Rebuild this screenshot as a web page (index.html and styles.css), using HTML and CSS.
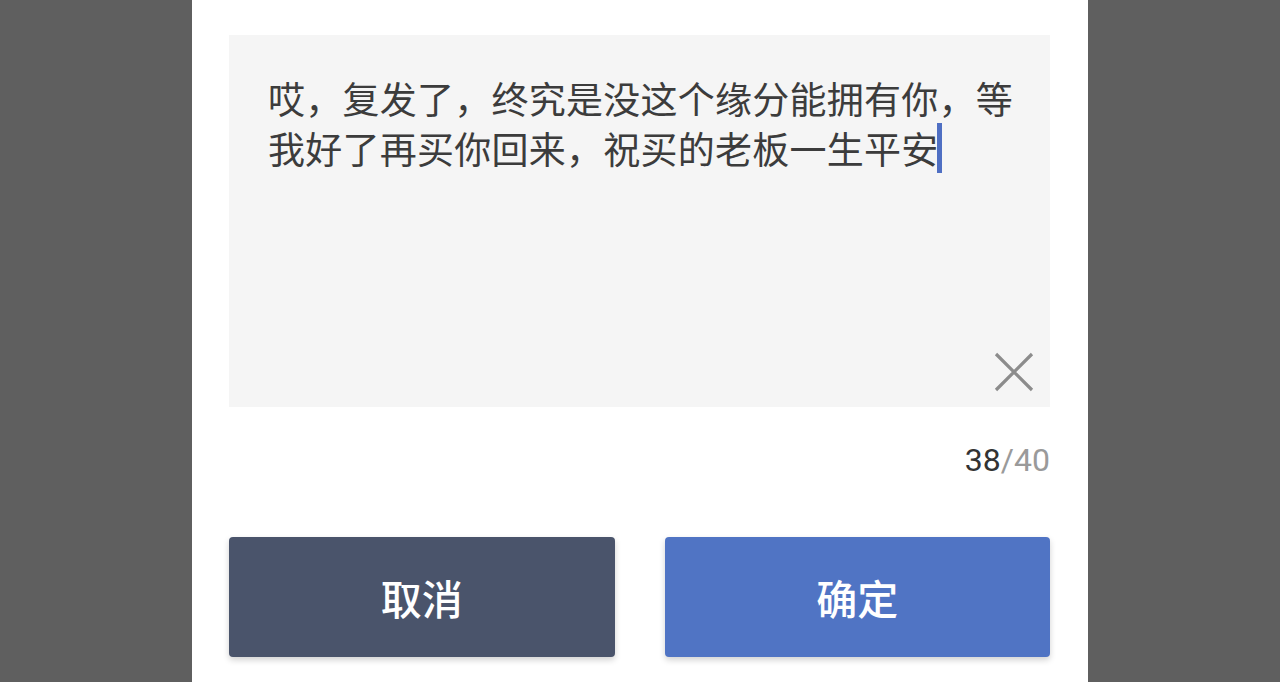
FILE: index.html
```html
<!DOCTYPE html>
<html lang="zh-CN">
<head>
    <meta charset="UTF-8">
    <meta name="viewport" content="width=device-width, initial-scale=1.0">
    <title>填写备注</title>
    <link rel="stylesheet" href="styles.css">
</head>
<body>
    <div class="dialog">
        <div class="input-box">
            <p class="input-text">哎，复发了，终究是没这个缘分能拥有你，等我好了再买你回来，祝买的老板一生平安<span class="caret"></span></p>
            <button class="clear" type="button" aria-label="清除">
                <svg width="40" height="40" viewBox="0 0 40 40">
                    <path d="M2 2 L38 38 M38 2 L2 38" stroke="#8c8c8c" stroke-width="3.2" fill="none"/>
                </svg>
            </button>
        </div>
        <div class="counter"><span class="count">38</span>/40</div>
        <div class="actions">
            <button class="btn btn-cancel" type="button">取消</button>
            <button class="btn btn-ok" type="button">确定</button>
        </div>
    </div>
</body>
</html>
```

FILE: styles.css
```css
body {
    margin: 0;
    height: 682px;
    overflow: hidden;
    background: #5f5f5f;
    display: flex;
    justify-content: center;
    font-family: "Noto Sans CJK SC", "Noto Sans", sans-serif;
}
.dialog {
    width: 896px;
    height: 682px;
    box-sizing: border-box;
    background: #fff;
    padding: 35px 38px 0 37px;
}
.input-box {
    height: 372px;
    box-sizing: border-box;
    background: #f5f5f5;
    padding: 38px 15px 15px 39px;
    display: flex;
    flex-direction: column;
}
.input-text {
    margin: 0;
    padding-right: 10px;
    font-size: 37px;
    letter-spacing: 0.25px;
    line-height: 50px;
    color: #3c3c3c;
    flex: 1;
}
.caret {
    display: inline-block;
    width: 5px;
    height: 50px;
    margin-left: -2px;
    background: #4f6fc3;
    vertical-align: top;
}
.clear {
    align-self: flex-end;
    margin-right: 1px;
    padding: 0;
    border: none;
    background: none;
    width: 40px;
    height: 40px;
}
.clear svg {
    display: block;
}
.counter {
    margin-top: 34px;
    text-align: right;
    font-family: Roboto, "Noto Sans", sans-serif;
    font-size: 32px;
    line-height: 38px;
    color: #9a9a9a;
}
.count {
    color: #333;
}
.actions {
    margin-top: 58px;
    display: flex;
    gap: 50px;
}
.btn {
    flex: 1;
    height: 120px;
    border: none;
    border-radius: 4px;
    color: #fff;
    font-family: "Noto Sans CJK SC", sans-serif;
    font-size: 41px;
    font-weight: 500;
    box-shadow: 0 3px 6px rgba(0, 0, 0, 0.18);
}
.btn-cancel {
    background: #4a546b;
}
.btn-ok {
    background: #5074c4;
}
```
